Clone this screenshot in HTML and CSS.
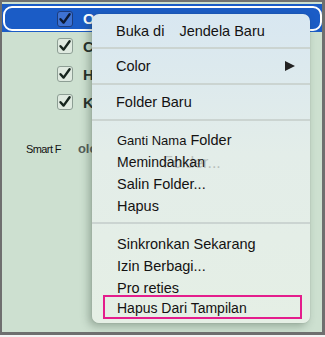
FILE: index.html
```html
<!DOCTYPE html>
<html lang="id">
<head>
<meta charset="utf-8">
<title>Folder menu</title>
<link rel="stylesheet" href="styles.css">
</head>
<body>
<div class="frame">
  <div class="rows">
    <div class="row selected">
      <div class="ring">
        <span class="box"><svg viewBox="0 0 16 16" width="16" height="16"><path d="M3.5 8.2 L6.6 11.6 L12.6 3.2" /></svg></span>
        <span class="name">O</span>
      </div>
    </div>
    <div class="row">
      <span class="box"><svg viewBox="0 0 16 16" width="16" height="16"><path d="M3.5 8.2 L6.6 11.6 L12.6 3.2" /></svg></span>
      <span class="name">C</span>
    </div>
    <div class="row">
      <span class="box"><svg viewBox="0 0 16 16" width="16" height="16"><path d="M3.5 8.2 L6.6 11.6 L12.6 3.2" /></svg></span>
      <span class="name">H</span>
    </div>
    <div class="row">
      <span class="box"><svg viewBox="0 0 16 16" width="16" height="16"><path d="M3.5 8.2 L6.6 11.6 L12.6 3.2" /></svg></span>
      <span class="name">K</span>
    </div>
    <div class="smart"><span>Smart F</span><b>olc</b></div>
  </div>

  <div class="menu">
    <div class="section single"><span>Buka di</span><span class="far">Jendela Baru</span></div>
    <div class="section single color"><span>Color</span><span class="arrow"></span></div>
    <div class="section single"><span>Folder Baru</span></div>
    <div class="section group">
      <div class="item"><span class="small">Ganti Nama</span> Folder</div>
      <div class="item ghosted"><span class="ghost">Folder...</span><span class="front">Memindahkan</span></div>
      <div class="item">Salin Folder...</div>
      <div class="item">Hapus</div>
    </div>
    <div class="section group last">
      <div class="item">Sinkronkan Sekarang</div>
      <div class="item">Izin Berbagi...</div>
      <div class="item">Pro reties</div>
      <div class="item marked">Hapus Dari Tampilan</div>
    </div>
  </div>
</div>
</body>
</html>
```

FILE: styles.css
```css
body {
  margin: 0;
  background: #f4f4f4;
  font-family: "Liberation Sans", Arial, sans-serif;
}
.frame {
  position: relative;
  width: 325px;
  height: 335px;
  box-sizing: border-box;
  border: 2px solid #6f6f6f;
  border-right-width: 3px;
  border-bottom-width: 3px;
  background: #cde0d0;
  overflow: hidden;
}
.rows {
  padding-top: 2px;
}
.row {
  height: 28px;
  display: flex;
  align-items: center;
  padding-left: 55px;
}
.row.selected {
  background: #1b5cc6;
  padding: 2px 0 1px 0;
  height: 25px;
}
.ring {
  flex: 1;
  height: 100%;
  box-sizing: border-box;
  margin: 0 0 0 1px;
  border: 2px solid #fff;
  border-radius: 9px;
  display: flex;
  align-items: center;
  padding-left: 52px;
}
.box {
  width: 16px;
  height: 16px;
  box-sizing: border-box;
  border: 1px solid #8d9e94;
  border-radius: 3px;
  background: #dfeae0;
  display: flex;
}
.box svg {
  margin: -1px;
}
.box path {
  fill: none;
  stroke: #17261e;
  stroke-width: 2.4;
  stroke-linecap: round;
  stroke-linejoin: round;
}
.selected .box {
  background: #3e72d2;
  border-color: #1d3c7c;
}
.selected .box path {
  stroke: #0d1a33;
}
.name {
  margin-left: 10px;
  font-size: 15px;
  font-weight: bold;
  color: #26302b;
}
.selected .name {
  color: #fff;
}
.smart {
  margin-top: 25px;
  padding-left: 24px;
  display: flex;
  align-items: baseline;
}
.smart span {
  font-size: 11px;
  letter-spacing: -0.6px;
  color: #111;
}
.smart b {
  margin-left: 17px;
  font-size: 13px;
  color: #555d58;
}

.menu {
  position: absolute;
  left: 90px;
  top: 12px;
  width: 218px;
  height: 309px;
  border-radius: 7px;
  background: linear-gradient(#d8e7f1, #e3ede9 45%, #e5efe5);
  box-shadow: -3px 3px 9px rgba(40, 60, 45, 0.35), 0 0 1px rgba(0, 0, 0, 0.3);
  color: #141212;
  font-size: 14.5px;
}
.section {
  border-bottom: 2px solid #cbd4d1;
}
.single {
  height: 34px;
  display: flex;
  align-items: center;
  padding-left: 24px;
}
.single:first-child {
  height: 33px;
}
.far {
  margin-left: 15px;
}
.color {
  justify-content: space-between;
  padding-right: 15px;
}
.arrow {
  width: 0;
  height: 0;
  border-top: 5.5px solid transparent;
  border-bottom: 5.5px solid transparent;
  border-left: 10px solid #222;
}
.group {
  padding: 8px 0 5px;
}
.group.last {
  border-bottom: none;
  padding: 9px 0 0;
}
.item {
  height: 22px;
  line-height: 22px;
  padding-left: 25px;
  position: relative;
  white-space: nowrap;
}
.small {
  font-size: 13px;
}
.ghosted {
  font-size: 14px;
}
.ghost {
  position: absolute;
  left: 71px;
  top: 1px;
  color: #b9bfbc;
  font-size: 16px;
}
.front {
  position: relative;
}
.marked {
  margin: -4px 8px 0 11px;
  border: 2px solid #e41d8c;
  height: 20px;
  line-height: 22px;
  padding-left: 12px;
  font-size: 14px;
}
```
